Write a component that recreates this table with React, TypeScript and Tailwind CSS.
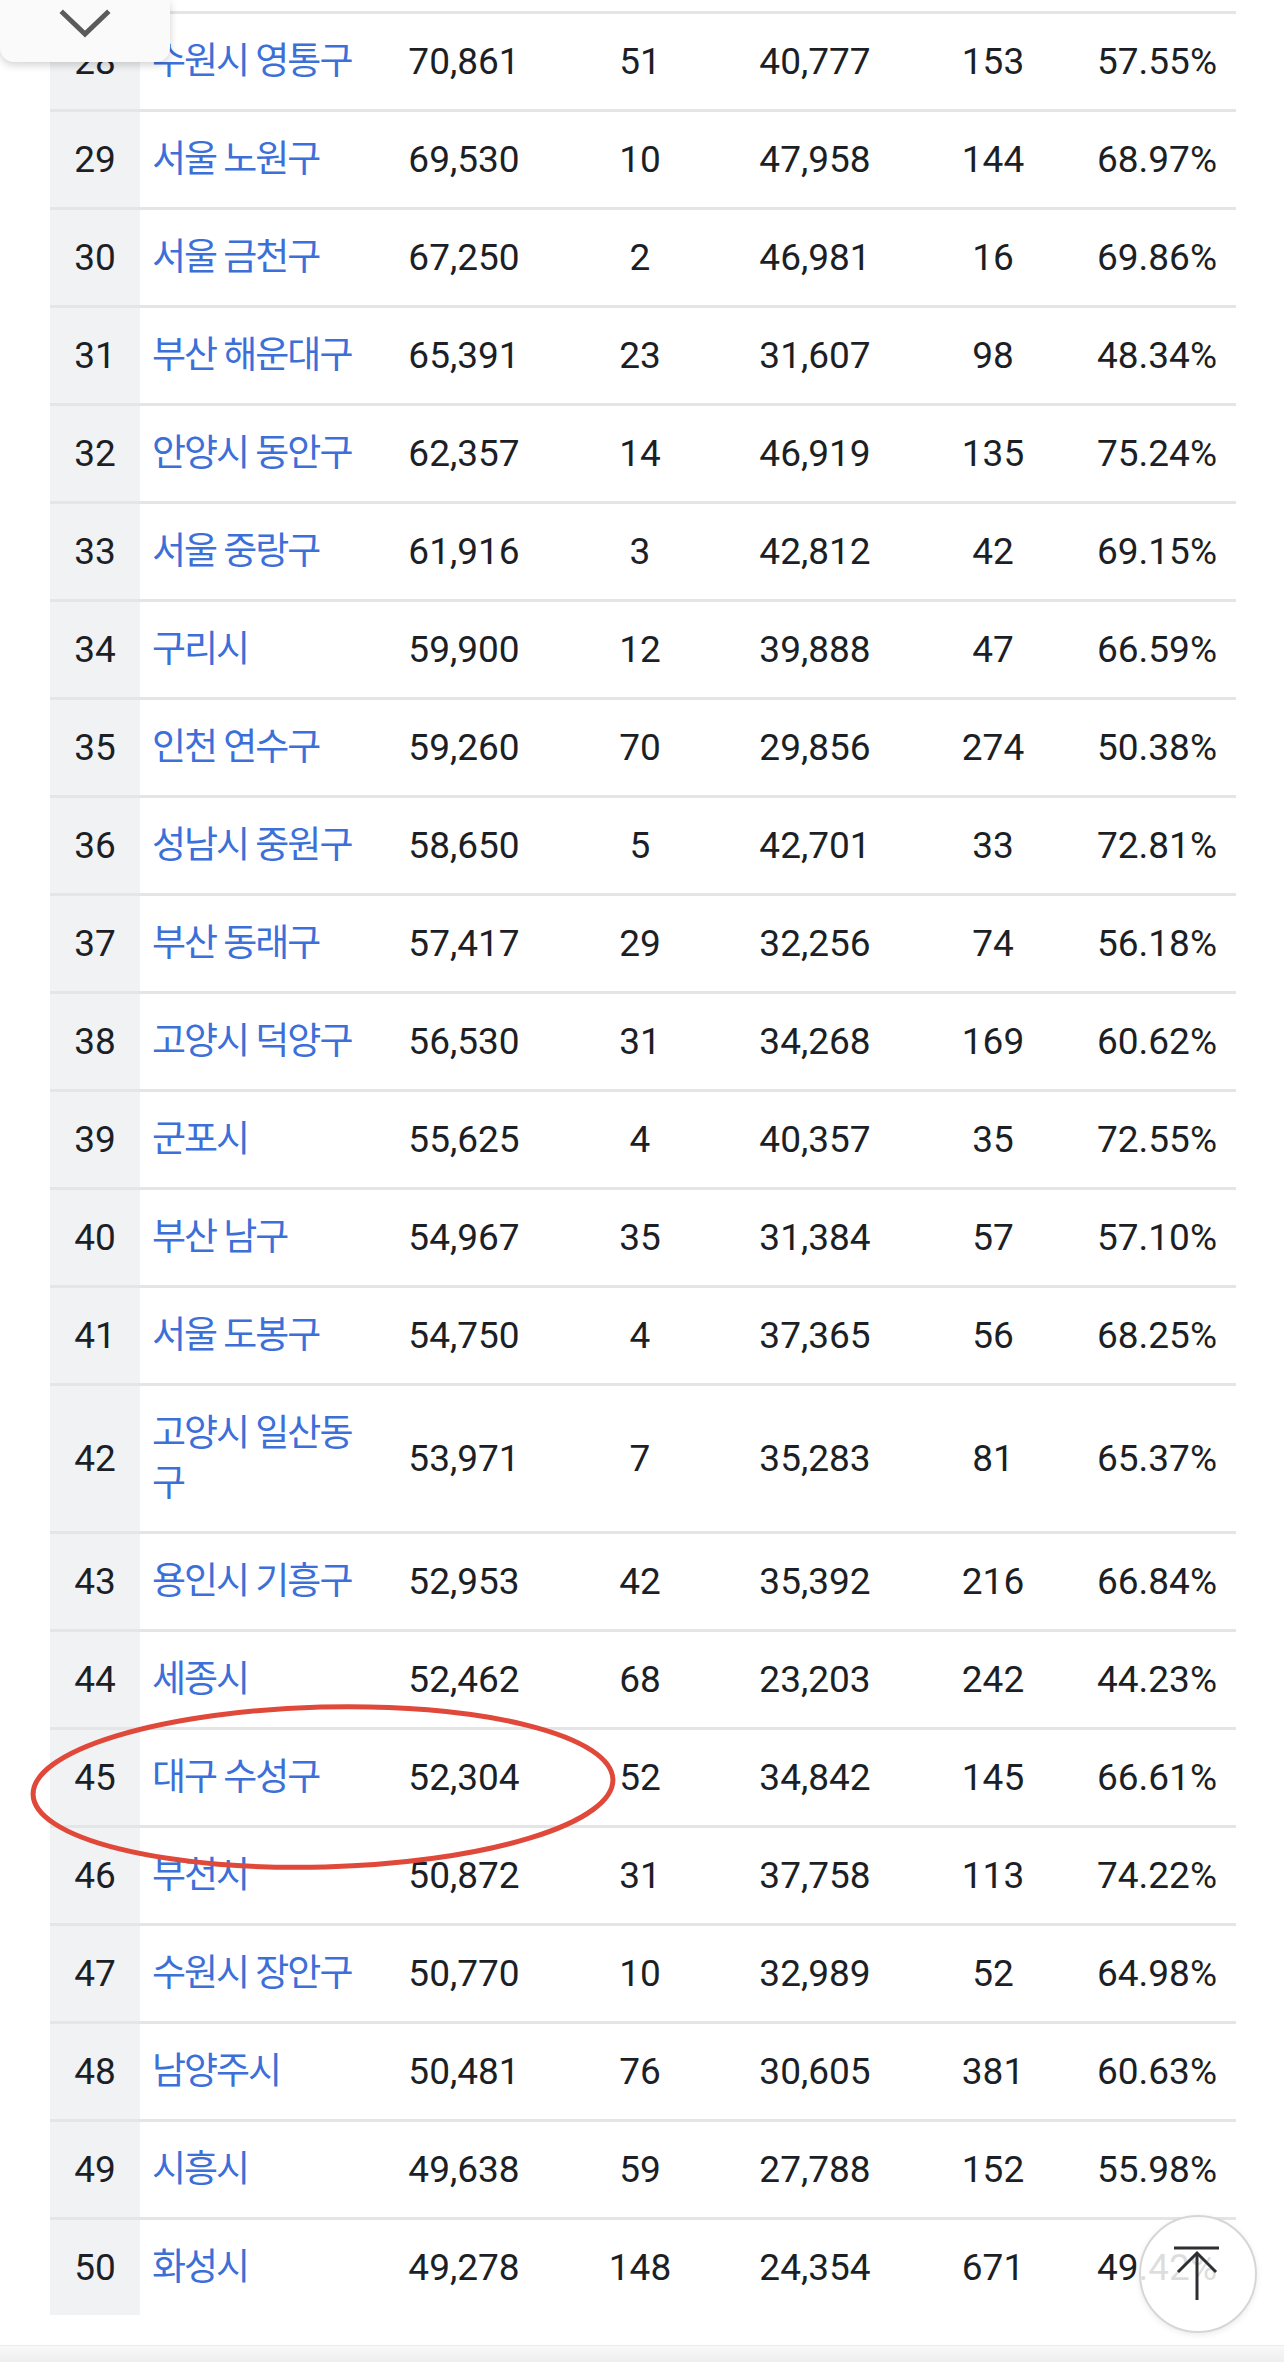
import React from "react";

type Row = [number, string, string, string, string, string, string];

const rows: Row[] = [
  [28, "수원시 영통구", "70,861", "51", "40,777", "153", "57.55%"],
  [29, "서울 노원구", "69,530", "10", "47,958", "144", "68.97%"],
  [30, "서울 금천구", "67,250", "2", "46,981", "16", "69.86%"],
  [31, "부산 해운대구", "65,391", "23", "31,607", "98", "48.34%"],
  [32, "안양시 동안구", "62,357", "14", "46,919", "135", "75.24%"],
  [33, "서울 중랑구", "61,916", "3", "42,812", "42", "69.15%"],
  [34, "구리시", "59,900", "12", "39,888", "47", "66.59%"],
  [35, "인천 연수구", "59,260", "70", "29,856", "274", "50.38%"],
  [36, "성남시 중원구", "58,650", "5", "42,701", "33", "72.81%"],
  [37, "부산 동래구", "57,417", "29", "32,256", "74", "56.18%"],
  [38, "고양시 덕양구", "56,530", "31", "34,268", "169", "60.62%"],
  [39, "군포시", "55,625", "4", "40,357", "35", "72.55%"],
  [40, "부산 남구", "54,967", "35", "31,384", "57", "57.10%"],
  [41, "서울 도봉구", "54,750", "4", "37,365", "56", "68.25%"],
  [42, "고양시 일산동구", "53,971", "7", "35,283", "81", "65.37%"],
  [43, "용인시 기흥구", "52,953", "42", "35,392", "216", "66.84%"],
  [44, "세종시", "52,462", "68", "23,203", "242", "44.23%"],
  [45, "대구 수성구", "52,304", "52", "34,842", "145", "66.61%"],
  [46, "부천시", "50,872", "31", "37,758", "113", "74.22%"],
  [47, "수원시 장안구", "50,770", "10", "32,989", "52", "64.98%"],
  [48, "남양주시", "50,481", "76", "30,605", "381", "60.63%"],
  [49, "시흥시", "49,638", "59", "27,788", "152", "55.98%"],
  [50, "화성시", "49,278", "148", "24,354", "671", "49.42%"],
];

const grid =
  "grid grid-cols-[90px_230px_188px_164px_186px_170px_158px] items-stretch";

function TableRow({ row, last }: { row: Row; last: boolean }) {
  const [rank, name, ...nums] = row;
  return (
    <div
      className={`${grid} ${last ? "" : "border-b-[3px] border-[#e4e5e8]"}`}
    >
      <div className="flex items-center justify-center bg-[#f1f2f4] pt-[23px] pb-[22px]">
        {rank}
      </div>
      <div className="flex items-center px-3 pt-[23px] pb-[22px] text-[#3d6fd8] tracking-[-2px]">
        <span>{name}</span>
      </div>
      {nums.map((n, i) => (
        <div
          key={i}
          className="flex items-center justify-center pt-[23px] pb-[22px]"
        >
          {n}
        </div>
      ))}
    </div>
  );
}

export default function App() {
  return (
    <div className="relative w-[1284px] h-[2362px] overflow-hidden bg-white font-['Roboto','Noto_Sans_CJK_KR',sans-serif] text-[37px] leading-[50px] text-[#1c1f26]">
      {/* table, scrolled so that row 27 is just off the top */}
      <div className="ml-[50px] w-[1186px]">
        <div className={`${grid} h-[14px] border-b-[3px] border-[#e4e5e8]`}>
          <div className="bg-[#f1f2f4]" />
        </div>
        {rows.map((r, i) => (
          <TableRow key={r[0]} row={r} last={i === rows.length - 1} />
        ))}
      </div>

      <div className="h-[30px]" />
      <div className="h-[17px] border-t border-[#ececec] bg-gradient-to-b from-[#f8f8f8] to-[#eeeeee]" />

      {/* collapse button at the top */}
      <div className="absolute left-0 top-0 flex h-[62px] w-[170px] items-start justify-center rounded-b-[14px] bg-[#fafafa] pt-[9px] shadow-[0_3px_8px_rgba(0,0,0,0.18)]">
        <svg width="54" height="30" viewBox="0 0 54 30" fill="none">
          <path
            d="M5 4 L27 25 L49 4"
            stroke="#5b5b5b"
            strokeWidth="5"
            strokeLinecap="square"
          />
        </svg>
      </div>

      {/* red marker around row 45 */}
      <svg
        className="absolute left-[20px] top-[1695px]"
        width="610"
        height="185"
        viewBox="0 0 610 185"
        fill="none"
      >
        <ellipse
          cx="303"
          cy="92"
          rx="290"
          ry="80"
          transform="rotate(-1.5 303 92)"
          stroke="#e0483a"
          strokeWidth="5"
        />
      </svg>

      {/* back to top */}
      <button className="absolute left-[1139px] top-[2215px] h-[118px] w-[118px] rounded-full border-2 border-[#d6d6d6] bg-white/85 shadow-[0_2px_6px_rgba(0,0,0,0.08)]">
        <svg
          className="absolute left-[-2px] top-[-2px]"
          width="118"
          height="118"
          viewBox="0 0 118 118"
          fill="none"
          stroke="#2e2f33"
          strokeWidth="3"
        >
          <path d="M35 33 H80" />
          <path d="M39 57 L58 38 L77 57" />
          <path d="M58 38 V85" />
        </svg>
      </button>
    </div>
  );
}
